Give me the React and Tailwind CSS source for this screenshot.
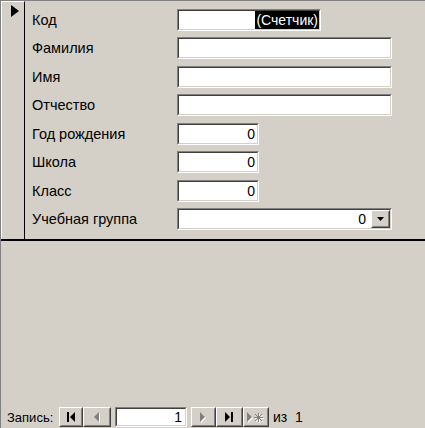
const font = { fontFamily: '"Liberation Sans", Arial, sans-serif' }

const rows = [
  { label: 'Код', kind: 'counter', w: 'w-[144px]', mt: 'mt-0' },
  { label: 'Фамилия', kind: 'text', w: 'w-[215px]', mt: 'mt-[6px]' },
  { label: 'Имя', kind: 'text', w: 'w-[215px]', mt: 'mt-[7px]' },
  { label: 'Отчество', kind: 'text', w: 'w-[215px]', mt: 'mt-[6px]' },
  { label: 'Год рождения', kind: 'num', w: 'w-[82px]', mt: 'mt-[7px]' },
  { label: 'Школа', kind: 'num', w: 'w-[82px]', mt: 'mt-[6px]' },
  { label: 'Класс', kind: 'num', w: 'w-[82px]', mt: 'mt-[7px]' },
  { label: 'Учебная группа', kind: 'combo', w: 'w-[215px]', mt: 'mt-[6px]' },
]

// classic sunken 2px edge
const Sunken = ({ w, h = 'h-[22px]', children }) => (
  <div className={`${w} ${h} border border-t-[#808080] border-l-[#808080] border-r-white border-b-white`}>
    <div className="h-full w-full border border-t-[#404040] border-l-[#404040] border-r-[#d4d0c8] border-b-[#d4d0c8] bg-white flex items-center justify-end">
      {children}
    </div>
  </div>
)

// classic raised button edge
const Raised = ({ w, h = 'h-[20px]', children }) => (
  <div className={`${w} ${h} border border-t-white border-l-white border-r-[#404040] border-b-[#404040] bg-[#d4d0c8]`}>
    <div className="h-full w-full border border-t-[#d4d0c8] border-l-[#d4d0c8] border-r-[#808080] border-b-[#808080] flex items-center justify-center">
      {children}
    </div>
  </div>
)

const Field = ({ row }) => {
  if (row.kind === 'counter') {
    return (
      <Sunken w={row.w}>
        <span className="h-full bg-black text-white flex items-center px-px leading-none">(Счетчик)</span>
      </Sunken>
    )
  }
  if (row.kind === 'num') {
    return (
      <Sunken w={row.w}>
        <span className="pr-[2px] leading-none">0</span>
      </Sunken>
    )
  }
  if (row.kind === 'combo') {
    return (
      <Sunken w={row.w}>
        <span className="pr-[5px] leading-none">0</span>
        <Raised w="w-[19px]" h="h-full">
          <svg width="7" height="4" viewBox="0 0 7 4">
            <polygon points="0,0 7,0 3.5,4" fill="black" />
          </svg>
        </Raised>
      </Sunken>
    )
  }
  return <Sunken w={row.w} />
}

const Disabled = ({ children, w, h, vb }) => (
  <svg width={w} height={h} viewBox={vb}>
    <g transform="translate(1,1)" fill="white" stroke="white">{children}</g>
    <g fill="#808080" stroke="#808080">{children}</g>
  </svg>
)

export default function App() {
  return (
    <div style={font} className="w-[425px] h-[428px] bg-[#d4d0c8] text-black text-[14px] flex flex-col border-t border-l border-[#808080] overflow-hidden">
      {/* detail section */}
      <div className="h-[240px] flex border-b-2 border-black shrink-0">
        <div className="w-[24px] h-full border-t border-l border-r border-t-white border-l-white border-r-black pt-[3px] pl-[9px]">
          <svg width="8" height="12" viewBox="0 0 8 12">
            <polygon points="0,0 8,6 0,12" fill="black" />
          </svg>
        </div>
        <div className="flex-1 pt-[8px] pl-[7px]">
          {rows.map((row) => (
            <div key={row.label} className={`flex items-center h-[22px] ${row.mt}`}>
              <div className="w-[145px] leading-none text-[14.5px]">{row.label}</div>
              <Field row={row} />
            </div>
          ))}
        </div>
      </div>

      <div className="flex-1" />

      {/* record navigation */}
      <div className="flex items-center h-[20px] mb-px pl-[6px]">
        <div className="w-[52px] leading-none text-[13px]">Запись:</div>
        <Raised w="w-[24px]">
          <svg width="9" height="10" viewBox="0 0 9 10">
            <rect x="0" y="0" width="2" height="10" fill="black" />
            <polygon points="8,0 3,5 8,10" fill="black" />
          </svg>
        </Raised>
        <Raised w="w-[28px]">
          <Disabled w="7" h="11" vb="0 0 7 11">
            <polygon points="5,0 0,5 5,10" strokeWidth="0" />
          </Disabled>
        </Raised>
        <div className="ml-[4px]">
          <Sunken w="w-[72px]" h="h-[20px]">
            <span className="pr-[3px] leading-none">1</span>
          </Sunken>
        </div>
        <div className="ml-[4px] flex">
          <Raised w="w-[25px]">
            <Disabled w="7" h="11" vb="0 0 7 11">
              <polygon points="0,0 5,5 0,10" strokeWidth="0" />
            </Disabled>
          </Raised>
          <Raised w="w-[27px]">
            <svg width="9" height="10" viewBox="0 0 9 10">
              <polygon points="0,0 5,5 0,10" fill="black" />
              <rect x="6" y="0" width="2" height="10" fill="black" />
            </svg>
          </Raised>
          <Raised w="w-[26px]">
            <Disabled w="18" h="11" vb="0 0 18 11">
              <polygon points="0,0 5,5 0,10" strokeWidth="0" />
              <g strokeWidth="1" fill="none">
                <line x1="11.5" y1="1" x2="11.5" y2="10" />
                <line x1="7" y1="5.5" x2="16" y2="5.5" />
                <line x1="8" y1="2" x2="15" y2="9" />
                <line x1="15" y1="2" x2="8" y2="9" />
              </g>
            </Disabled>
          </Raised>
        </div>
        <div className="ml-[4px] leading-none">из&nbsp;&nbsp;1</div>
      </div>
    </div>
  )
}
